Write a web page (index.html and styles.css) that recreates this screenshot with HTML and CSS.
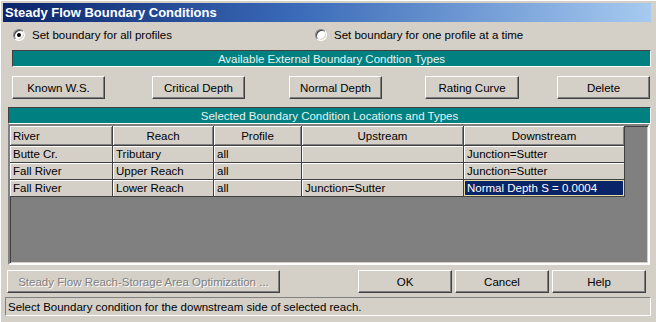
FILE: index.html
```html
<!DOCTYPE html>
<html>
<head>
<meta charset="utf-8">
<link rel="stylesheet" href="styles.css">
</head>
<body>
<div class="window">
  <div class="titlebar"><span class="title">Steady Flow Boundary Conditions</span></div>
  <div class="radios">
    <label class="radio-item first"><span class="radio checked"></span><span>Set boundary for all profiles</span></label>
    <label class="radio-item second"><span class="radio"></span><span>Set boundary for one profile at a time</span></label>
  </div>
  <div class="band band-types">Available External Boundary Condtion Types</div>
  <div class="type-buttons">
    <button class="btn t-known">Known W.S.</button>
    <button class="btn t-critical">Critical Depth</button>
    <button class="btn t-normal">Normal Depth</button>
    <button class="btn t-rating">Rating Curve</button>
    <button class="btn t-delete">Delete</button>
  </div>
  <div class="band band-selected">Selected Boundary Condition Locations and Types</div>
  <div class="grid-area">
    <table class="bc-table">
      <colgroup>
        <col class="c-river"><col class="c-reach"><col class="c-profile"><col class="c-up"><col class="c-down">
      </colgroup>
      <thead>
        <tr><th class="left">River</th><th>Reach</th><th>Profile</th><th>Upstream</th><th>Downstream</th></tr>
      </thead>
      <tbody>
        <tr><td>Butte Cr.</td><td>Tributary</td><td>all</td><td></td><td>Junction=Sutter</td></tr>
        <tr><td>Fall River</td><td>Upper Reach</td><td>all</td><td></td><td>Junction=Sutter</td></tr>
        <tr><td>Fall River</td><td>Lower Reach</td><td>all</td><td>Junction=Sutter</td><td class="selected">Normal Depth S = 0.0004</td></tr>
      </tbody>
    </table>
  </div>
  <div class="actions">
    <button class="btn btn-wide" disabled>Steady Flow Reach-Storage Area Optimization ...</button>
    <div class="action-right">
      <button class="btn">OK</button>
      <button class="btn">Cancel</button>
      <button class="btn">Help</button>
    </div>
  </div>
  <div class="status">Select Boundary condition for the downstream side of selected reach.</div>
</div>
</body>
</html>
```

FILE: styles.css
```css
html, body {
  margin: 0;
  padding: 0;
}
body {
  width: 656px;
  height: 322px;
  overflow: hidden;
  background: #d4d0c8;
  font-family: "Liberation Sans", Arial, sans-serif;
  font-size: 11.5px;
  color: #000;
}
.window {
  width: 656px;
  height: 322px;
  box-sizing: border-box;
  padding-top: 3px;
  box-shadow: inset 1px 1px #ffffff;
}
.titlebar {
  margin: 0 5px 0 3px;
  height: 19px;
  background: linear-gradient(to right, #0a246a 0%, #3a6ab8 45%, #a6caf0 100%);
  display: flex;
  align-items: center;
}
.title {
  color: #fff;
  font-weight: bold;
  font-size: 13px;
  padding-left: 2px;
}
.radios {
  display: flex;
  align-items: center;
  height: 18px;
  margin-top: 4px;
}
.radio-item {
  display: flex;
  align-items: center;
  gap: 7px;
}
.radio-item.first {
  margin-left: 13px;
  width: 302px;
}
.radio {
  width: 12px;
  height: 12px;
  box-sizing: border-box;
  border-radius: 50%;
  background: #fff;
  border: 1px solid;
  border-color: #808080 #ffffff #ffffff #808080;
  box-shadow: inset 1px 1px #404040, inset -1px -1px #d4d0c8;
  display: flex;
  align-items: center;
  justify-content: center;
}
.radio.checked::after {
  content: "";
  width: 4px;
  height: 4px;
  border-radius: 50%;
  background: #000;
}
.band {
  height: 17px;
  box-sizing: border-box;
  background: #008080;
  color: #e8f4f4;
  border: 1px solid;
  border-color: #404040 #ffffff #ffffff #404040;
  display: flex;
  align-items: center;
  justify-content: center;
  margin-right: 5px;
}
.band-types {
  margin-top: 6px;
  margin-left: 12px;
}
.band-selected {
  margin-top: 8px;
  margin-left: 8px;
}
.btn {
  height: 23px;
  box-sizing: border-box;
  background: #d4d0c8;
  border: 1px solid;
  border-color: #ffffff #404040 #404040 #ffffff;
  box-shadow: inset -1px -1px #808080;
  font-family: "Liberation Sans", Arial, sans-serif;
  font-size: 11.5px;
  color: #000;
  padding: 0;
  margin: 0;
}
.btn:disabled {
  color: #808080;
  text-shadow: 1px 1px #ffffff;
}
.type-buttons {
  display: flex;
  margin: 9px 6px 0 12px;
}
.type-buttons .btn {
  width: 93px;
}
.type-buttons .t-critical { margin-left: 47px; }
.type-buttons .t-normal { margin-left: 44px; }
.type-buttons .t-rating { margin-left: 43px; width: 94px; }
.type-buttons .t-delete { margin-left: 38px; }
.grid-area {
  margin: 0 6px 0 8px;
  height: 141px;
  box-sizing: border-box;
  background: #808080;
  border: 2px solid;
  border-color: #808080 #ffffff #ffffff #808080;
  box-shadow: inset 1px 1px #404040, inset -1px -1px #d4d0c8;
}
.bc-table {
  table-layout: fixed;
  border-collapse: separate;
  border-spacing: 0;
  width: 615px;
  background: #d4d0c8;
}
.c-river { width: 103px; }
.c-reach { width: 101px; }
.c-profile { width: 88px; }
.c-up { width: 162px; }
.c-down { width: 161px; }
.bc-table th,
.bc-table td {
  padding: 0 3px;
  border-right: 1px solid #404040;
  border-bottom: 1px solid #404040;
  box-shadow: inset 1px 1px #ffffff;
  white-space: nowrap;
  overflow: hidden;
  text-align: left;
  font-weight: normal;
  line-height: 14px;
}
.bc-table th {
  height: 19px;
  text-align: center;
  box-shadow: inset 1px 1px #ffffff, inset -1px -1px #808080;
}
.bc-table th.left {
  text-align: left;
}
.bc-table td {
  height: 16px;
}
.bc-table td.selected {
  background: #0a246a;
  color: #ffffff;
  box-shadow: inset 0 0 0 1px #e6dca8;
}
.actions {
  display: flex;
  justify-content: space-between;
  margin: 5px 10px 0 7px;
}
.btn-wide {
  width: 273px;
}
.action-right {
  display: flex;
  gap: 3px;
}
.action-right .btn {
  width: 94px;
}
.status {
  margin: 4px 5px 0 5px;
  height: 19px;
  box-sizing: border-box;
  border: 1px solid;
  border-color: #808080 #ffffff #ffffff #808080;
  padding-left: 2px;
  display: flex;
  align-items: center;
}
```
